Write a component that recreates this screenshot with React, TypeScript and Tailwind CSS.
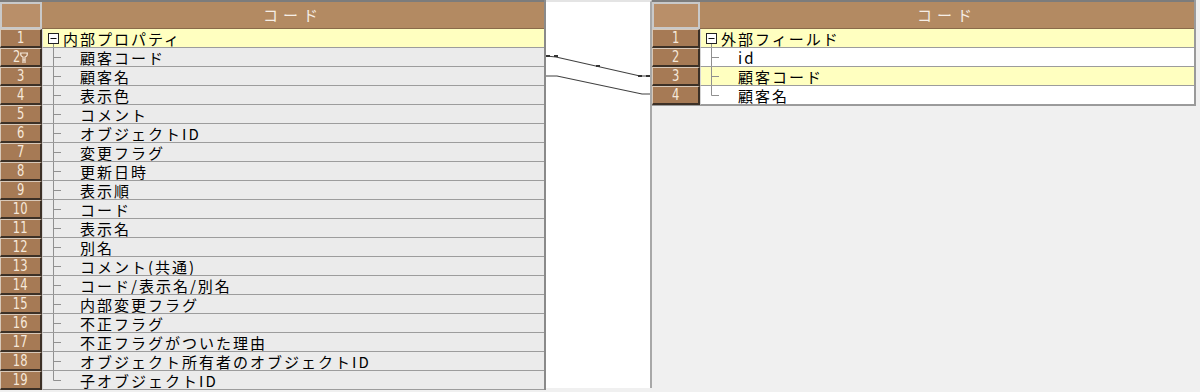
import React from "react";

const FONT = { fontFamily: '"Noto Sans CJK JP", "Noto Sans", sans-serif' };

type RowDef = { n: string; text: string; bg: string; root?: boolean; last?: boolean; cursor?: boolean };

function NumCell({ n, w, cursor }: { n: string; w: string; cursor?: boolean }) {
  return (
    <div
      className={`${w} h-full shrink-0 bg-[#a67a55] border-t border-l border-t-[#d8c8b8] border-l-[#d8c8b8] border-b-2 border-r-2 border-b-[#3c3026] border-r-[#3c3026] flex items-center justify-center text-[16px] leading-none text-[#f6e8da]`}
      style={{ fontFamily: '"DejaVu Sans Condensed", "Liberation Sans Narrow", sans-serif' }}
    >
      <span className="inline-block scale-x-[0.8]">{n}</span>
      {cursor && (
        <svg width="10" height="13" viewBox="0 0 10 13" className="ml-[-2px]">
          <path d="M1 2 L9 2 M2 2 Q1 5 4 6 L4 12 M8 2 Q9 5 6 6 L6 12 M4 9 L6 9" stroke="#f6e8da" strokeWidth="1.2" fill="none" />
        </svg>
      )}
    </div>
  );
}

function Tree({ root, last }: { root?: boolean; last?: boolean }) {
  if (root) {
    return (
      <svg width="19" height="18" className="shrink-0">
        <rect x="5.5" y="4.5" width="10" height="10" fill="#fff" stroke="#222" />
        <line x1="7.5" y1="9.5" x2="13.5" y2="9.5" stroke="#111" />
        <line x1="10.5" y1="15" x2="10.5" y2="18" stroke="#909090" />
      </svg>
    );
  }
  return (
    <svg width="37" height="18" className="shrink-0">
      <line x1="10.5" y1="0" x2="10.5" y2={last ? 9.5 : 18} stroke="#909090" />
      <line x1="10.5" y1="9.5" x2="18" y2="9.5" stroke="#909090" />
    </svg>
  );
}

function Panel({ rows, numW, contentW }: { rows: RowDef[]; numW: string; contentW: string }) {
  return (
    <div className="flex flex-col border-t-2 border-t-[#7c7c7c]">
      <div className="flex h-[27px]">
        <div className={`${numW} h-full shrink-0 bg-[#b98f69] border-2 border-[#c9c9c9]`} />
        <div
          className={`${contentW} h-full bg-[#b38a62] border-b border-[#8a6a4a] flex items-center justify-center text-[15px] tracking-[5px] text-[#f6eee6]`}
          style={FONT}
        >
          コード
        </div>
      </div>
      {rows.map((r, i) => (
        <div key={i} className="flex h-[19px]">
          <NumCell n={r.n} w={numW} cursor={r.cursor} />
          <div
            className={`${contentW} h-full ${r.bg} border-b border-b-[#9c9c9c] border-l border-l-[#d4d4d4] flex items-center text-[15px] tracking-[2px] text-black leading-none overflow-hidden whitespace-nowrap`}
            style={FONT}
          >
            <Tree root={r.root} last={r.last} />
            <span className={r.root ? "ml-[1px]" : ""}>{r.text}</span>
          </div>
        </div>
      ))}
    </div>
  );
}

const leftTexts = [
  "顧客コード",
  "顧客名",
  "表示色",
  "コメント",
  "オブジェクトID",
  "変更フラグ",
  "更新日時",
  "表示順",
  "コード",
  "表示名",
  "別名",
  "コメント(共通)",
  "コード/表示名/別名",
  "内部変更フラグ",
  "不正フラグ",
  "不正フラグがついた理由",
  "オブジェクト所有者のオブジェクトID",
  "子オブジェクトID",
];

const leftRows: RowDef[] = [
  { n: "1", text: "内部プロパティ", bg: "bg-[#ffffc0]", root: true },
  ...leftTexts.map((t, i) => ({
    n: String(i + 2),
    text: t,
    bg: "bg-[#ebebeb]",
    last: i === leftTexts.length - 1,
    cursor: i === 0,
  })),
];

const rightRows: RowDef[] = [
  { n: "1", text: "外部フィールド", bg: "bg-[#ffffc0]", root: true },
  { n: "2", text: "id", bg: "bg-white" },
  { n: "3", text: "顧客コード", bg: "bg-[#ffffc0]" },
  { n: "4", text: "顧客名", bg: "bg-white", last: true },
];

export default function App() {
  return (
    <div className="w-[1200px] h-[392px] bg-[#f0f0f0] flex items-start overflow-hidden">
      <div className="w-[546px] shrink-0 border-r-2 border-r-[#8a8a8a]">
        <Panel rows={leftRows} numW="w-[42px]" contentW="w-[502px]" />
      </div>
      <div className="w-[106px] h-[388px] shrink-0 bg-white border-r-2 border-r-[#a8a8a8] border-t-2 border-t-[#e4e4e4]">
        <svg width="104" height="386" viewBox="0 2 104 386" className="block">
          <polyline points="0,56 10,57 94,76 104,76" fill="none" stroke="#404040" strokeWidth="1.2" />
          <polyline points="0,76 11,76 96,94 104,94" fill="none" stroke="#404040" strokeWidth="1.2" />
          <rect x="0" y="55" width="4" height="2" fill="#333" />
          <rect x="8" y="55" width="4" height="2" fill="#333" />
          <rect x="50" y="65" width="4" height="2" fill="#333" />
          <rect x="92" y="75" width="4" height="2" fill="#333" />
          <rect x="100" y="75" width="4" height="2" fill="#333" />
        </svg>
      </div>
      <div className="w-[544px] shrink-0 border-r-2 border-r-[#9a9a9a] border-b border-b-[#9a9a9a]">
        <Panel rows={rightRows} numW="w-[48px]" contentW="w-[494px]" />
      </div>
    </div>
  );
}
